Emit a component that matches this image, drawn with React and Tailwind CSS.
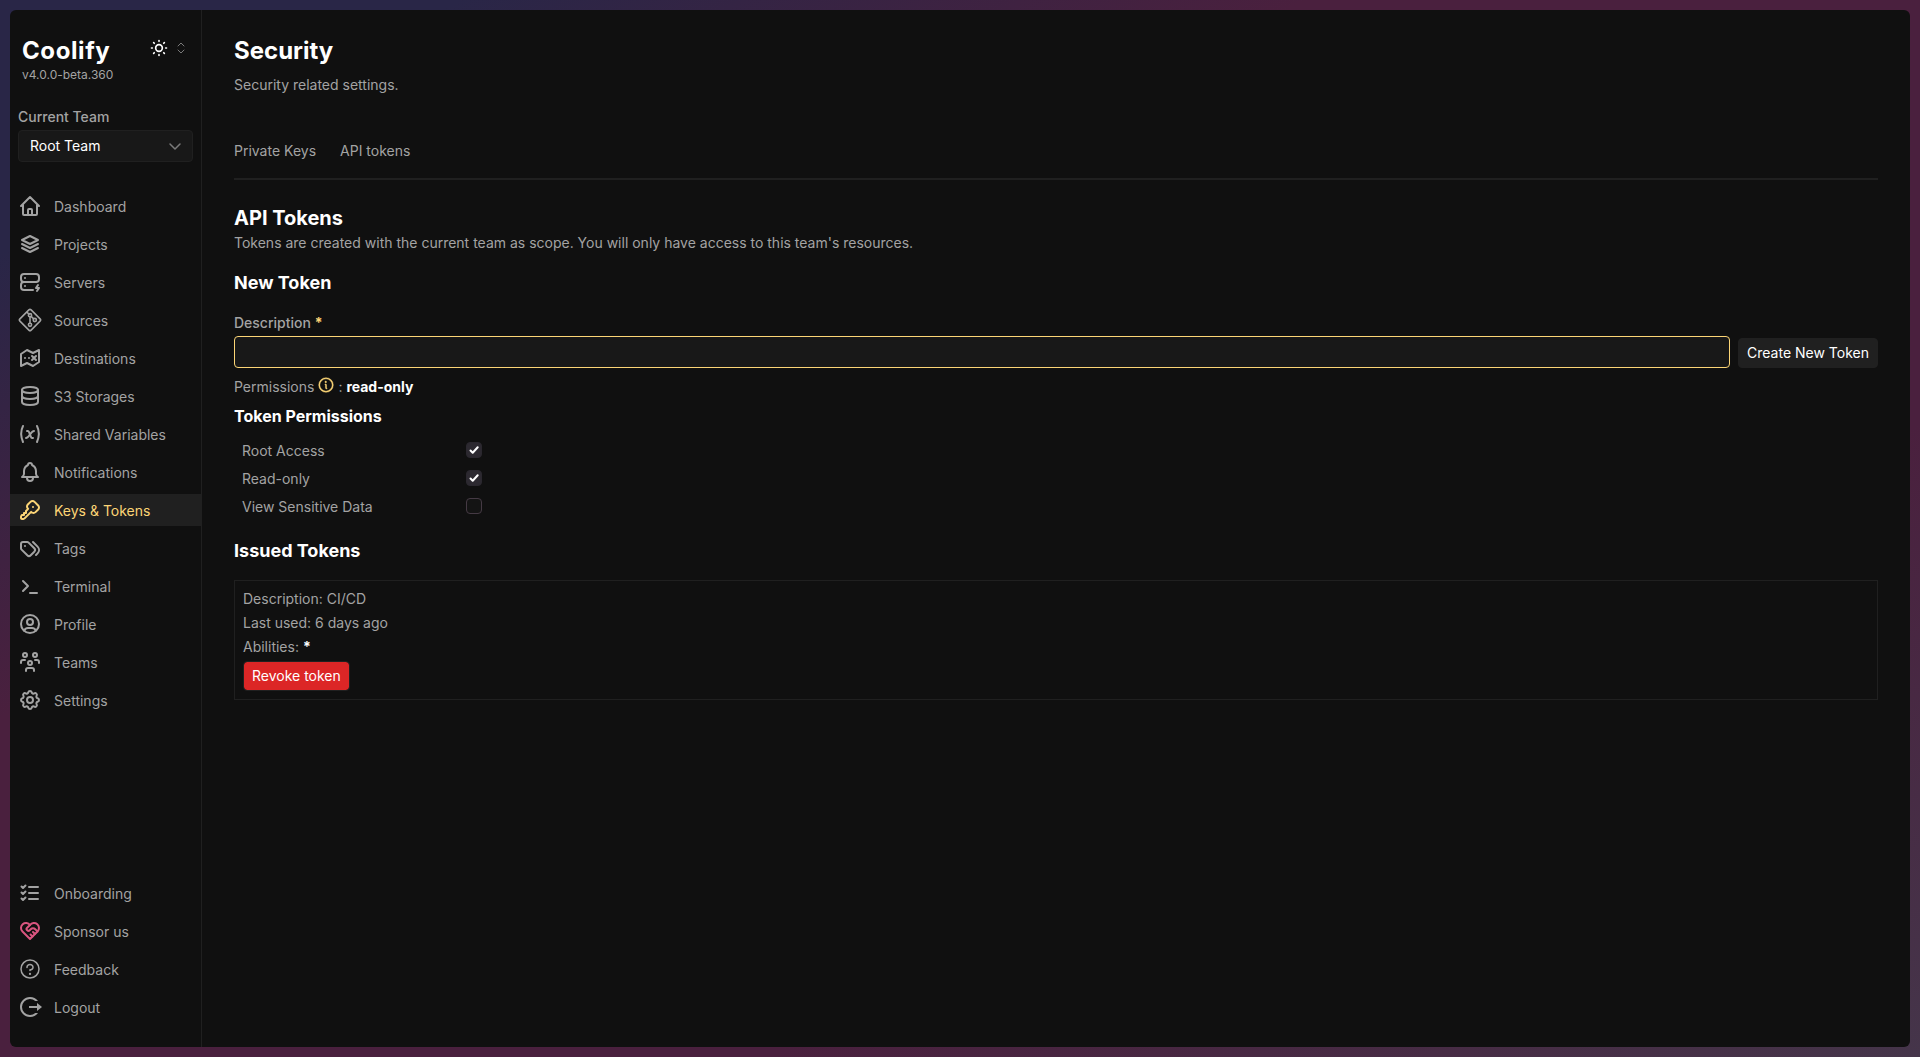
const STROKE = {
  fill: "none",
  stroke: "currentColor",
  strokeWidth: 2,
  strokeLinecap: "round",
  strokeLinejoin: "round",
};

function LineIcon({ paths, className = "size-6" }) {
  return (
    <svg viewBox="0 0 24 24" className={className} aria-hidden="true" {...STROKE}>
      {paths.map((d) => (
        <path key={d} d={d} />
      ))}
    </svg>
  );
}

const GitIcon = () => (
  <svg viewBox="0 0 15 15" className="size-6" aria-hidden="true" fill="none" stroke="currentColor">
    <path d="M6.793 1.207 1.207 6.793a1 1 0 0 0 0 1.414l5.586 5.586a1 1 0 0 0 1.414 0l5.586-5.586a1 1 0 0 0 0-1.414L8.207 1.207a1 1 0 0 0-1.414 0Z" />
    <path d="M5.5 2.5 7.15 4.15M7.5 5.5v4M8.2 5.2l1.6 1.6" />
    <circle cx="7.5" cy="4.5" r="1" />
    <circle cx="10.5" cy="7.5" r="1" />
    <circle cx="7.5" cy="10.5" r="1" />
  </svg>
);

const QuestionIcon = () => (
  <svg viewBox="0 0 256 256" className="size-6" aria-hidden="true" fill="currentColor">
    <path d="M140 180a12 12 0 1 1-12-12a12 12 0 0 1 12 12ZM128 72c-22.06 0-40 16.15-40 36v4a8 8 0 0 0 16 0v-4c0-11 10.77-20 24-20s24 9 24 20s-10.77 20-24 20a8 8 0 0 0-8 8v8a8 8 0 0 0 16 0v-.72c18.24-3.35 32-17.9 32-35.28c0-19.85-17.94-36-40-36Zm104 56A104 104 0 1 1 128 24a104.11 104.11 0 0 1 104 104Zm-16 0a88 88 0 1 0-88 88a88.1 88.1 0 0 0 88-88Z" />
  </svg>
);

const LogoutIcon = () => (
  <svg viewBox="0 0 24 24" className="size-6" aria-hidden="true" fill="currentColor">
    <path d="M12 22C6.477 22 2 17.523 2 12S6.477 2 12 2a9.985 9.985 0 0 1 8 4h-2.71a8 8 0 1 0 .001 12h2.71A9.985 9.985 0 0 1 12 22m7-6v-3h-8v-2h8V8l5 4z" />
  </svg>
);

const InfoIcon = () => (
  <svg viewBox="14 14 228 228" className="size-4" aria-hidden="true" fill="currentColor" stroke="currentColor" strokeWidth="6">
    <path d="M128 24a104 104 0 1 0 104 104A104.11 104.11 0 0 0 128 24Zm0 192a88 88 0 1 1 88-88a88.1 88.1 0 0 1-88 88Zm16-40a8 8 0 0 1-8 8a16 16 0 0 1-16-16v-40a8 8 0 0 1 0-16a16 16 0 0 1 16 16v40a8 8 0 0 1 8 8Zm-32-92a12 12 0 1 1 12 12a12 12 0 0 1-12-12Z" />
  </svg>
);

const MAIN_NAV = [
  {
    label: "Dashboard",
    paths: [
      "M3 12l2-2m0 0l7-7 7 7M5 10v10a1 1 0 001 1h3m10-11l2 2m-2-2v10a1 1 0 01-1 1h-3m-6 0a1 1 0 001-1v-4a1 1 0 011-1h2a1 1 0 011 1v4a1 1 0 001 1m-6 0h6",
    ],
  },
  { label: "Projects", paths: ["M12 4l-8 4l8 4l8-4l-8-4", "m4 12l8 4l8-4", "m4 16l8 4l8-4"] },
  {
    label: "Servers",
    paths: [
      "M3 7a3 3 0 0 1 3-3h12a3 3 0 0 1 3 3v2a3 3 0 0 1-3 3H6a3 3 0 0 1-3-3z",
      "M15 20H6a3 3 0 0 1-3-3v-2a3 3 0 0 1 3-3h12M7 8v.01M7 16v.01M20 15l-2 3h3l-2 3",
    ],
  },
  { label: "Sources", icon: <GitIcon /> },
  {
    label: "Destinations",
    paths: [
      "M9 4L3 8v12l6-3l6 3l6-4V4l-6 3l-6-3zm-2 8.001V12m4 .001V12m3-2l2 2m2 2l-2-2m0 0l2-2m-2 2l-2 2",
    ],
  },
  {
    label: "S3 Storages",
    paths: [
      "M4 6a8 3 0 1 0 16 0A8 3 0 1 0 4 6",
      "M4 6v6a8 3 0 0 0 16 0V6",
      "M4 12v6a8 3 0 0 0 16 0v-6",
    ],
  },
  {
    label: "Shared Variables",
    paths: [
      "M5 4C2.5 9 2.5 14 5 20M19 4c2.5 5 2.5 10 0 16M9 9h1c1 0 1 1 2.016 3.527C13 15 13 16 14 16h1",
      "M8 16c1.5 0 3-2 4-3.5S14.5 9 16 9",
    ],
  },
  {
    label: "Notifications",
    paths: [
      "M10 5a2 2 0 1 1 4 0a7 7 0 0 1 4 6v3a4 4 0 0 0 2 3H4a4 4 0 0 0 2-3v-3a7 7 0 0 1 4-6",
      "M9 17v1a3 3 0 0 0 6 0v-1",
    ],
  },
  {
    label: "Keys & Tokens",
    active: true,
    paths: [
      "m16.555 3.843l3.602 3.602a2.877 2.877 0 0 1 0 4.069l-2.643 2.643a2.877 2.877 0 0 1-4.069 0l-.301-.301l-6.558 6.558a2 2 0 0 1-1.239.578L5.172 21H4a1 1 0 0 1-.993-.883L3 20v-1.172a2 2 0 0 1 .467-1.284l.119-.13L4 17h2v-2h2v-2l2.144-2.144l-.301-.301a2.877 2.877 0 0 1 0-4.069l2.643-2.643a2.877 2.877 0 0 1 4.069 0z",
      "M15 9h.01",
    ],
  },
  {
    label: "Tags",
    paths: [
      "M3 8v4.172a2 2 0 0 0 .586 1.414l5.71 5.71a2.41 2.41 0 0 0 3.408 0l3.592-3.592a2.41 2.41 0 0 0 0-3.408l-5.71-5.71A2 2 0 0 0 9.172 6H5a2 2 0 0 0-2 2",
      "m18 19l1.592-1.592a4.82 4.82 0 0 0 0-6.816L15 6m-8 4h-.01",
    ],
  },
  { label: "Terminal", paths: ["m5 7l5 5l-5 5m7 2h7"] },
  {
    label: "Profile",
    paths: [
      "M3 12a9 9 0 1 0 18 0a9 9 0 1 0-18 0",
      "M9 10a3 3 0 1 0 6 0a3 3 0 1 0-6 0",
      "M6.168 18.849A4 4 0 0 1 10 16h4a4 4 0 0 1 3.834 2.855",
    ],
  },
  {
    label: "Teams",
    paths: [
      "M10 13a2 2 0 1 0 4 0a2 2 0 0 0-4 0m-2 8v-1a2 2 0 0 1 2-2h4a2 2 0 0 1 2 2v1M15 5a2 2 0 1 0 4 0a2 2 0 0 0-4 0m2 5h2a2 2 0 0 1 2 2v1M5 5a2 2 0 1 0 4 0a2 2 0 0 0-4 0m-2 8v-1a2 2 0 0 1 2-2h2",
    ],
  },
  {
    label: "Settings",
    paths: [
      "M10.325 4.317c.426-1.756 2.924-1.756 3.35 0a1.724 1.724 0 0 0 2.573 1.066c1.543-.94 3.31.826 2.37 2.37a1.724 1.724 0 0 0 1.065 2.572c1.756.426 1.756 2.924 0 3.35a1.724 1.724 0 0 0-1.066 2.573c.94 1.543-.826 3.31-2.37 2.37a1.724 1.724 0 0 0-2.572 1.065c-.426 1.756-2.924 1.756-3.35 0a1.724 1.724 0 0 0-2.573-1.066c-1.543.94-3.31-.826-2.37-2.37a1.724 1.724 0 0 0-1.065-2.572c-1.756-.426-1.756-2.924 0-3.35a1.724 1.724 0 0 0 1.066-2.573c-.94-1.543.826-3.31 2.37-2.37c1 .608 2.296.07 2.572-1.065",
      "M9 12a3 3 0 1 0 6 0a3 3 0 0 0-6 0",
    ],
  },
];

const FOOTER_NAV = [
  {
    label: "Onboarding",
    paths: [
      "M3.5 5.5L5 7l2.5-2.5m-4 7L5 13l2.5-2.5m-4 7L5 19l2.5-2.5M11 6h9m-9 6h9m-9 6h9",
    ],
  },
  {
    label: "Sponsor us",
    iconColor: "text-[#d9557f]",
    paths: [
      "M19.5 12.572L12 20l-7.5-7.428A5 5 0 1 1 12 6.006a5 5 0 1 1 7.5 6.572",
      "M12 6L8.707 9.293a1 1 0 0 0 0 1.414l.543.543c.69.69 1.81.69 2.5 0l1-1a3.182 3.182 0 0 1 4.5 0l2.25 2.25m-7 3l2 2M15 13l2 2",
    ],
  },
  { label: "Feedback", icon: <QuestionIcon /> },
  { label: "Logout", icon: <LogoutIcon /> },
];

function NavItem({ item }) {
  const tone = item.active ? "bg-[#202020] text-[#fcd576]" : "text-[#a3a3a3]";
  return (
    <li>
      <a href="#" aria-current={item.active ? "page" : undefined} className={`flex items-center gap-3 px-2 py-1 ${tone}`}>
        <span className={item.iconColor}>{item.icon ?? <LineIcon paths={item.paths} />}</span>
        <span className="pt-0.5">{item.label}</span>
      </a>
    </li>
  );
}

function Sidebar() {
  return (
    <aside className="flex w-48 shrink-0 flex-col border-r border-[#202020] pb-6">
      <div className="flex justify-between px-3 pt-[25px]">
        <div>
          <div className="text-2xl font-bold tracking-wide text-white">Coolify</div>
          <div className="text-xs">v4.0.0-beta.360</div>
        </div>
        <div className="flex h-[26px] items-center gap-1">
          <button type="button" aria-label="Theme" className="text-white">
            <LineIcon className="size-5" paths={["M8 12a4 4 0 1 0 8 0a4 4 0 1 0-8 0m-5 0h1m8-9v1m8 8h1m-9 8v1M5.6 5.6l.7.7m12.1-.7l-.7.7m0 11.4l.7.7m-12.1-.7l-.7.7"]} />
          </button>
          <button type="button" aria-label="Zoom" className="text-[#7a7a7a]">
            <svg viewBox="0 0 16 16" className="size-4" aria-hidden="true" fill="none" stroke="currentColor" strokeLinecap="round" strokeLinejoin="round">
              <path d="m5 6 3-3 3 3M5 10l3 3 3-3" />
            </svg>
          </button>
        </div>
      </div>

      <div className="flex flex-col gap-[3px] px-2 pt-6">
        <label htmlFor="team" className="font-medium">Current Team</label>
        <div className="relative">
          <select id="team" className="h-8 w-full appearance-none rounded-sm border border-[#202020] bg-[#181818] px-[11px] text-white">
            <option>Root Team</option>
          </select>
          <svg viewBox="0 0 16 16" className="pointer-events-none absolute top-2 right-2.5 size-4 text-[#7a7a7a]" aria-hidden="true" fill="none" stroke="currentColor" strokeWidth="1.5" strokeLinecap="round" strokeLinejoin="round">
            <path d="m3 6 5 5 5-5" />
          </svg>
        </div>
      </div>

      <nav className="flex flex-1 flex-col justify-between pt-7">
        <ul className="flex flex-col gap-1.5">
          {MAIN_NAV.map((item) => (
            <NavItem key={item.label} item={item} />
          ))}
        </ul>
        <ul className="flex flex-col gap-1.5">
          {FOOTER_NAV.map((item) => (
            <NavItem key={item.label} item={item} />
          ))}
        </ul>
      </nav>
    </aside>
  );
}

function Permission({ id, label, checked = false }) {
  return (
    <div className="flex h-7 w-64 items-center justify-between px-2">
      <label htmlFor={id} className="pt-0.5">{label}</label>
      <span className="relative flex">
        <input
          id={id}
          type="checkbox"
          defaultChecked={checked}
          className="peer size-4 appearance-none rounded border border-[#453a44] bg-[#141414] checked:border-[#2a272e] checked:bg-[#2c2930]"
        />
        <svg viewBox="0 0 16 16" className="pointer-events-none absolute inset-0 hidden size-4 text-white peer-checked:block" aria-hidden="true" fill="none" stroke="currentColor" strokeWidth="2" strokeLinecap="round" strokeLinejoin="round">
          <path d="m4.5 8.5 2.2 2.2 5-5.4" />
        </svg>
      </span>
    </div>
  );
}

export default function App() {
  return (
    <div className="flex min-h-screen bg-[linear-gradient(to_bottom_right,#292647_12%,#4a203e_34%,#4a203e_70%,#45354a)] p-2.5 font-['Inter',sans-serif] text-sm text-[#a3a3a3]">
      <div className="flex flex-1 rounded-md bg-[#101010]">
        <Sidebar />
        <main className="min-w-0 flex-1 px-8 pt-[25px]">
          <h1 className="text-2xl font-bold text-white">Security</h1>
          <p className="pt-2">Security related settings.</p>
          <nav className="mt-10 flex gap-6 border-b-2 border-[#202020] pt-1.5 pb-[17px]">
            <a href="#">Private Keys</a>
            <a href="#">API tokens</a>
          </nav>

          <section className="pt-6">
            <h2 className="text-xl font-bold text-white">API Tokens</h2>
            <p className="pt-px">Tokens are created with the current team as scope. You will only have access to this team's resources.</p>
            <h3 className="pt-4 text-lg font-bold text-white">New Token</h3>
            <form className="flex items-end gap-2 pt-4" onSubmit={(e) => e.preventDefault()}>
              <div className="flex flex-1 flex-col gap-[3px]">
                <label htmlFor="description" className="font-medium">
                  Description <span className="font-bold text-[#fcd576]">*</span>
                </label>
                <input id="description" type="text" required className="h-8 w-full rounded-sm border border-[#fcd576] bg-[#181818] px-2 text-white outline-none" />
              </div>
              <button type="submit" className="h-[30px] rounded-sm border border-[#202020] bg-[#202020] px-2 text-white">Create New Token</button>
            </form>
            <div className="flex gap-1 pt-[9px]">
              Permissions
              <span className="text-[#fcd576]"><InfoIcon /></span>
              <span>: <strong className="font-bold text-white">read-only</strong></span>
            </div>
            <h4 className="pt-[7px] text-base font-bold text-white">Token Permissions</h4>
            <div className="pt-2">
              <Permission id="root-access" label="Root Access" checked />
              <Permission id="read-only" label="Read-only" checked />
              <Permission id="view-sensitive" label="View Sensitive Data" />
            </div>
          </section>

          <section className="pt-[17px]">
            <h3 className="text-lg font-bold text-white">Issued Tokens</h3>
            <div className="mt-[15px] flex flex-col items-start gap-1 border border-[#202020] p-2">
              <div>Description: CI/CD</div>
              <div>Last used: 6 days ago</div>
              <div>Abilities: <span className="font-bold text-white">*</span></div>
              <button type="button" className="h-[30px] rounded-sm border border-[#202020] bg-[#dc2626] bg-clip-padding px-2 text-white">Revoke token</button>
            </div>
          </section>
        </main>
      </div>
    </div>
  );
}
